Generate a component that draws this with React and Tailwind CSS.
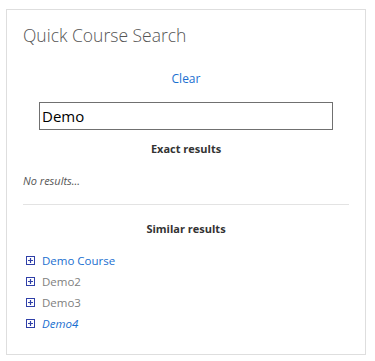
import React from "react";

function PlusBox() {
  return (
    <svg width="9" height="9" viewBox="0 0 9 9" className="shrink-0">
      <rect x="0.5" y="0.5" width="8" height="8" fill="none" stroke="#2f3fa8" strokeWidth="1" />
      <path d="M4.5 2v5M2 4.5h5" stroke="#2f3fa8" strokeWidth="1.2" />
    </svg>
  );
}

const items = [
  { label: "Demo Course", cls: "text-[#1a6fd0]" },
  { label: "Demo2", cls: "text-[#808080]" },
  { label: "Demo3", cls: "text-[#808080]" },
  { label: "Demo4", cls: "text-[#1a6fd0] italic" },
];

export default function App() {
  return (
    <div
      className="w-[375px] h-[361px] bg-white pt-[9px] pl-[6px]"
      style={{ fontFamily: '"Open Sans", "Noto Sans", sans-serif' }}
    >
      <div className="w-[360px] h-[346px] border border-[#dedede] px-4 pt-[11px] flex flex-col">
        <div className="h-7 leading-7 text-[17.5px] font-light text-[#555]">
          Quick Course Search
        </div>
        <div className="mt-[20px] h-5 leading-5 text-center text-[12px] text-[#1a6fd0]">
          Clear
        </div>
        <div className="mt-[13px] flex justify-center">
          <div className="w-[294px] h-[28px] border border-[#707070] pl-[2px] flex items-center text-[15px] text-black">
            Demo
          </div>
        </div>
        <div className="mt-[9px] h-5 leading-5 text-center text-[11px] font-bold text-[#333]">
          Exact results
        </div>
        <div className="mt-[12px] h-5 leading-5 text-[11px] italic text-[#555]">
          No results...
        </div>
        <div className="mt-[13px] h-px bg-[#e3e3e3]" />
        <div className="mt-[14px] h-5 leading-5 text-center text-[11px] font-bold text-[#333]">
          Similar results
        </div>
        <div className="mt-[11px] flex flex-col pl-[3px]">
          {items.map((it) => (
            <div key={it.label} className="h-[21px] flex items-center gap-[7px]">
              <PlusBox />
              <span className={"text-[11.5px] leading-[21px] " + it.cls}>{it.label}</span>
            </div>
          ))}
        </div>
      </div>
    </div>
  );
}
